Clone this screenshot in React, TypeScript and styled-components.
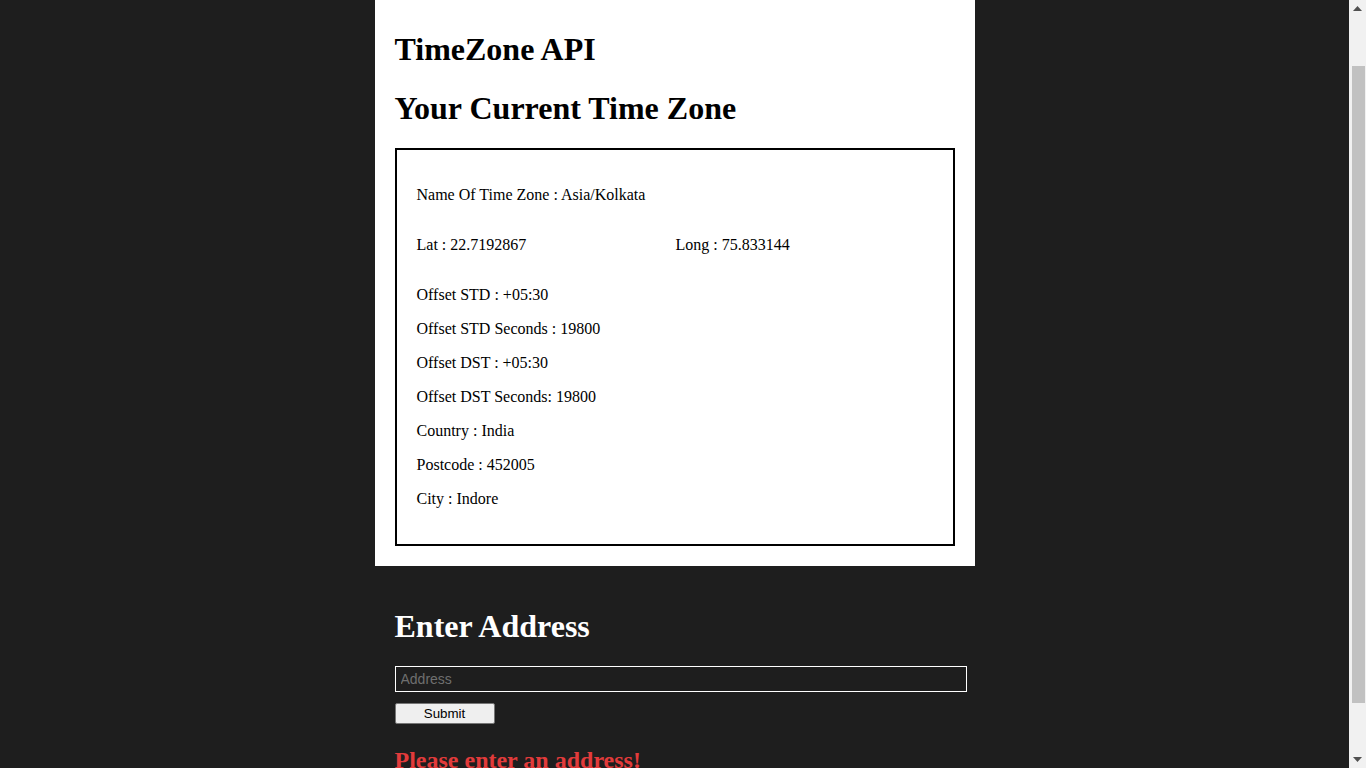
import React from "react";
import styled, { createGlobalStyle } from "styled-components";

const Global = createGlobalStyle`
  html, body { margin: 0; padding: 0; height: 100%; overflow: hidden; background: #1e1e1e; }
  body { font-family: "Liberation Serif", "Times New Roman", serif; }
`;

const Page = styled.div`
  display: flex;
  height: 768px;
  overflow: hidden;
`;

const Main = styled.main`
  flex: 1;
  display: flex;
  flex-direction: column;
  align-items: center;
`;

const Column = styled.div`
  width: 600px;
`;

const Card = styled.section`
  background: #ffffff;
  color: #000;
  padding: 10px 20px 20px;
`;

const Title = styled.h1<{ $light?: boolean }>`
  font-family: "Liberation Serif", "Times New Roman", serif;
  font-size: 32px;
  font-weight: bold;
  margin: 21.44px 0;
  color: ${(p) => (p.$light ? "#ffffff" : "#000000")};
`;

const InfoBox = styled.div`
  border: 2px solid #000;
  padding: 20px;
`;

const FlexRow = styled.div`
  display: flex;
  flex-direction: column;
`;

const TwoCol = styled.div`
  display: grid;
  grid-template-columns: 1fr 1fr;
`;

const Line = styled.p<{ $shift?: boolean }>`
  margin: 16px 0;
  padding-left: ${(p) => (p.$shift ? "1px" : "0")};
  font-size: 16px;
  line-height: normal;
`;

const FormSection = styled.section`
  padding: 20px 20px;
`;

const AddressInput = styled.input`
  display: block;
  width: 100%;
  box-sizing: content-box;
  padding: 4px 5px;
  margin: 0 0 11px;
  border: 1px solid #ffffff;
  background: #1e1e1e;
  color: #fff;
  font-family: Arial, "Liberation Sans", sans-serif;
  font-size: 14px;
  line-height: 16px;
  height: 16px;
  outline: none;
  &::placeholder { color: #6f6f6f; }
`;

const SubmitButton = styled.button`
  display: block;
  width: 100px;
  height: 21px;
  padding: 0;
  background: #efefef;
  border: 1px solid #767676;
  border-radius: 2px;
  color: #000;
  font-family: Arial, "Liberation Sans", sans-serif;
  font-size: 13.33px;
`;

const ErrorText = styled.h2`
  margin: 23px 0 0;
  font-family: "Liberation Serif", "Times New Roman", serif;
  font-size: 24px;
  font-weight: bold;
  color: #e23b3b;
`;

const Scrollbar = styled.div`
  width: 17px;
  flex: none;
  background: #f1f1f1;
  display: flex;
  flex-direction: column;
  align-items: center;
`;

const Arrow = styled.div`
  height: 17px;
  width: 17px;
  display: flex;
  align-items: center;
  justify-content: center;
  flex: none;
`;

const Track = styled.div`
  flex: 1;
  width: 100%;
  display: flex;
  justify-content: center;
  padding-top: 49px;
  padding-bottom: 48px;
  box-sizing: border-box;
`;

const Thumb = styled.div`
  width: 13px;
  background: #c1c1c1;
  height: 100%;
  margin-left: 1px;
`;

export default function App() {
  return (
    <>
      <Global />
      <Page>
        <Main>
          <Column>
            <Card>
              <Title>TimeZone API</Title>
              <Title>Your Current Time Zone</Title>
              <InfoBox>
                <FlexRow>
                  <Line>Name Of Time Zone : Asia/Kolkata</Line>
                </FlexRow>
                <TwoCol>
                  <Line>Lat : 22.7192867</Line>
                  <Line $shift>Long : 75.833144</Line>
                </TwoCol>
                <div>
                  <Line>Offset STD : +05:30</Line>
                  <Line>Offset STD Seconds : 19800</Line>
                  <Line>Offset DST : +05:30</Line>
                  <Line>Offset DST Seconds: 19800</Line>
                  <Line>Country : India</Line>
                  <Line>Postcode : 452005</Line>
                  <Line>City : Indore</Line>
                </div>
              </InfoBox>
            </Card>
            <FormSection>
              <Title $light>Enter Address</Title>
              <AddressInput placeholder="Address" />
              <SubmitButton>Submit</SubmitButton>
              <ErrorText>Please enter an address!</ErrorText>
            </FormSection>
          </Column>
        </Main>
        <Scrollbar>
          <Arrow>
            <svg width="9" height="5" viewBox="0 0 9 5"><path d="M4.5 0L9 5H0z" fill="#505050" /></svg>
          </Arrow>
          <Track>
            <Thumb />
          </Track>
          <Arrow>
            <svg width="9" height="5" viewBox="0 0 9 5"><path d="M0 0H9L4.5 5z" fill="#505050" /></svg>
          </Arrow>
        </Scrollbar>
      </Page>
    </>
  );
}
